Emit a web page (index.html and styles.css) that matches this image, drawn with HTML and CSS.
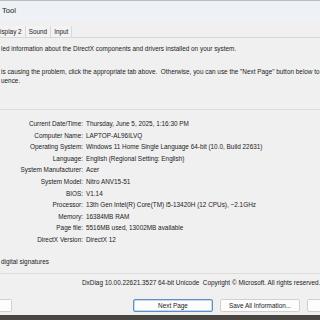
FILE: index.html
```html
<!DOCTYPE html>
<html>
<head>
<meta charset="utf-8">
<link rel="stylesheet" href="styles.css">
</head>
<body>
<div class="window">
  <div class="titlebar"><span class="title">Tool</span></div>
  <div class="tabs">
    <span class="tab">isplay 2</span>
    <span class="tab">Sound</span>
    <span class="tab">Input</span>
  </div>
  <div class="panel">
    <p class="intro">led information about the DirectX components and drivers installed on your system.</p>
    <p class="intro2">is causing the problem, click the appropriate tab above.&nbsp; Otherwise, you can use the "Next Page" button below to<br>uence.</p>
    <div class="sep"></div>
    <div class="info">
      <span class="lbl">Current Date/Time:</span><span class="val">Thursday, June 5, 2025, 1:16:30 PM</span>
      <span class="lbl">Computer Name:</span><span class="val">LAPTOP-AL96ILVQ</span>
      <span class="lbl">Operating System:</span><span class="val">Windows 11 Home Single Language 64-bit (10.0, Build 22631)</span>
      <span class="lbl">Language:</span><span class="val">English (Regional Setting: English)</span>
      <span class="lbl">System Manufacturer:</span><span class="val">Acer</span>
      <span class="lbl">System Model:</span><span class="val">Nitro ANV15-51</span>
      <span class="lbl">BIOS:</span><span class="val">V1.14</span>
      <span class="lbl">Processor:</span><span class="val">13th Gen Intel(R) Core(TM) i5-13420H (12 CPUs), ~2.1GHz</span>
      <span class="lbl">Memory:</span><span class="val">16384MB RAM</span>
      <span class="lbl">Page file:</span><span class="val">5516MB used, 13002MB available</span>
      <span class="lbl">DirectX Version:</span><span class="val">DirectX 12</span>
    </div>
    <p class="sig">digital signatures</p>
  </div>
  <div class="footer">
    <span class="ver">DxDiag 10.00.22621.3527 64-bit Unicode&nbsp; Copyright © Microsoft. All rights reserved.</span>
  </div>
  <div class="buttons">
    <span class="btn btn-cut"></span>
    <span class="btn btn-primary">Next Page</span>
    <span class="btn">Save All Information...</span>
    <span class="btn btn-last"></span>
  </div>
  <div class="taskbar"></div>
</div>
</body>
</html>
```

FILE: styles.css
```css
html, body {
  margin: 0;
  padding: 0;
  background: #f0f0f0;
  overflow: hidden;
}
.window {
  width: 320px;
  height: 320px;
  overflow: hidden;
  font-family: "Liberation Sans", Arial, sans-serif;
  font-size: 6.4px;
  color: #222;
  background: #f0f0f0;
  display: flex;
  flex-direction: column;
}
.titlebar {
  height: 20px;
  flex: none;
  box-sizing: border-box;
  border-top: 1px solid #b9bcc0;
  background: #eef1f5;
  display: flex;
  align-items: center;
  padding-left: 2px;
  font-size: 7.6px;
  color: #1a1a1a;
}
.tabs {
  margin-top: 6px;
  height: 11px;
  flex: none;
  display: flex;
  border-bottom: 1px solid #d9d9d9;
}
.tab {
  display: flex;
  align-items: center;
  padding: 0 3px;
  border-right: 1px solid #d9d9d9;
  background: #f3f3f3;
  white-space: nowrap;
}
.tab:first-child { padding-left: 0; }
.panel {
  display: flex;
  flex-direction: column;
  white-space: nowrap;
  flex: none;
}
.intro {
  margin: 6px 0 0 1px;
  line-height: 10px;
  height: 10px;
}
.intro2 {
  margin: 14px 0 0 1px;
  line-height: 8.5px;
  height: 17px;
}
.sep {
  margin-top: 24px;
  height: 1px;
  background: #dcdcdc;
}
.info {
  margin-top: 8px;
  display: grid;
  grid-template-columns: 83px auto;
  column-gap: 3px;
  line-height: 11.6px;
}
.lbl {
  text-align: right;
}
.sig {
  margin: 11px 0 0 1px;
  line-height: 10px;
  height: 10px;
}
.footer {
  margin-top: 6px;
  border-top: 1px solid #dcdcdc;
  height: 17px;
  flex: none;
  display: flex;
  align-items: center;
  padding-left: 82px;
  white-space: nowrap;
}
.buttons {
  margin-top: 8px;
  display: flex;
  height: 13px;
  flex: none;
  white-space: nowrap;
}
.btn {
  box-sizing: border-box;
  width: 80px;
  height: 13px;
  flex: none;
  border: 1px solid #d0d0d0;
  border-radius: 2px;
  background: #fdfdfd;
  display: flex;
  align-items: center;
  justify-content: center;
  margin-right: 7px;
}
.btn-cut {
  width: 12px;
  border-left: none;
  border-radius: 0 2px 2px 0;
  margin-right: 121px;
}
.btn-primary {
  border-color: #5b8fc7;
  box-shadow: inset 0 0 0 0.5px #8fb3d9;
}
.taskbar {
  margin-top: 3px;
  height: 6px;
  flex: none;
  background: #4a4743;
}
```
